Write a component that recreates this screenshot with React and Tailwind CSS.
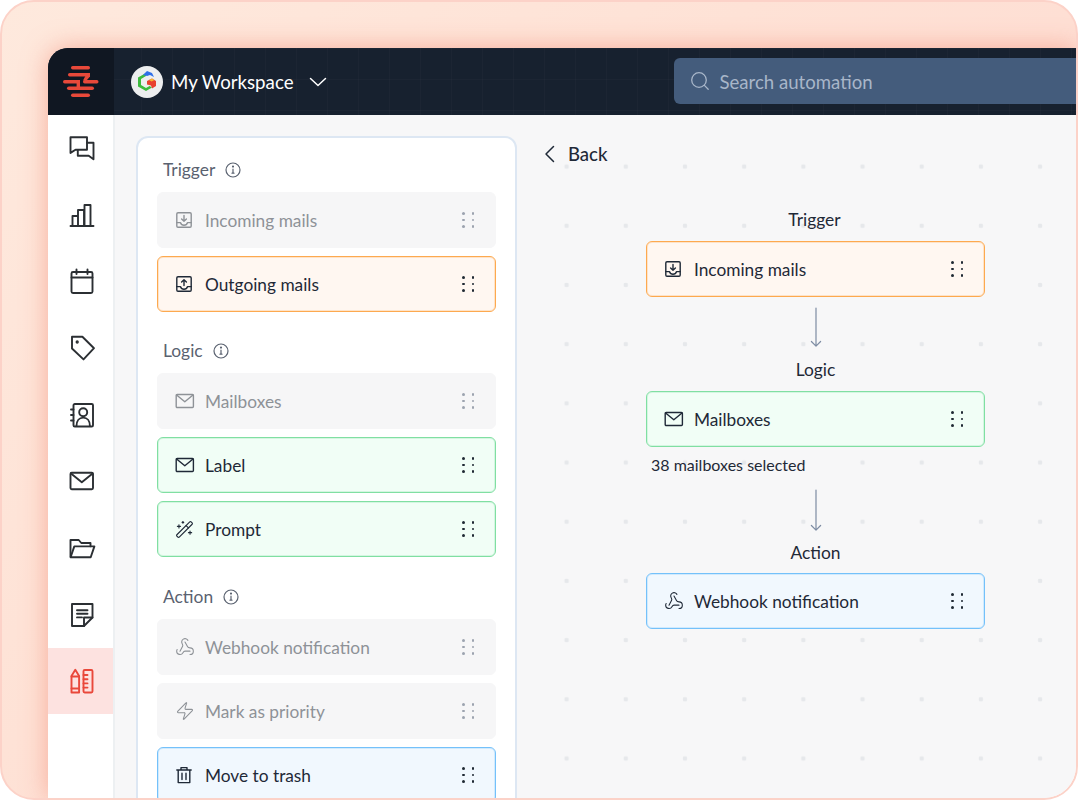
import React from "react";
import { Webhook, Zap, WandSparkles } from "lucide-react";

const S = ({ size = 24, className = "", children, vb, sw = 1.6 }) => (
  <svg width={size} height={size} viewBox={vb || "0 0 24 24"} fill="none" stroke="currentColor" strokeWidth={sw} strokeLinecap="round" strokeLinejoin="round" className={className}>
    {children}
  </svg>
);

const Logo = () => (
  <svg width="36" height="33" viewBox="0 0 36 33" fill="#e8493a">
    <rect x="8" y="1" width="19" height="3.4" rx="1.7" />
    <rect x="5" y="8" width="22" height="3.4" rx="1.7" />
    <rect x="0" y="15" width="16" height="3.4" rx="1.7" />
    <rect x="20" y="15" width="15.5" height="3.4" rx="1.7" />
    <rect x="4" y="21.5" width="27" height="3.6" rx="1.8" />
    <rect x="8" y="28.5" width="19" height="3.6" rx="1.8" />
    <path d="M24 8h3v3.4L23.5 15.5H20z" />
    <rect x="13.6" y="15" width="3.4" height="7" />
  </svg>
);

const WorkspaceMark = () => (
  <svg width="22" height="24" viewBox="0 0 22 24">
    <path d="M10 3 2 7.5v9L10 21l6-3.4-2.4-1.6L10 18l-5-3V9l5-3z" fill="#3dbb3d" />
    <path d="M7 5l4-4 5 2 2 4-4-2-3 1z" fill="#2f6fe8" />
    <path d="M11 11l5-2.5L20 11v5l-4 2.5-1-3-4-1z" fill="#e8412f" />
    <path d="M13 10l3-1.5 2.5 1.5-3 1.5z" fill="#f5b533" />
  </svg>
);

const NV = 1.9;
const ChatIcon = () => (
  <S size={28} vb="0 0 28 28" sw={NV}>
    <path d="M2.5 3.2H19v12.5H7.5l-5 3.2z" />
    <path d="M19 8.7h6.5V25.2l-4.8-3.5H9.8v-5.6" />
  </S>
);
const BarsIcon = () => (
  <S size={28} vb="0 0 28 28" sw={NV}>
    <path d="M2.5 25h23" />
    <path d="M4.5 25V15h5.5V25M10 25V9h6V25M16.5 25V4h6V25" />
  </S>
);
const CalIcon = () => (
  <S size={28} vb="0 0 28 28" sw={NV}>
    <rect x="3.5" y="5" width="21" height="21" rx="1.5" />
    <path d="M3.5 10.5h21M8.5 2.5v4.5M19.5 2.5v4.5" />
  </S>
);
const TagIcon = () => (
  <S size={28} vb="0 0 28 28" sw={NV}>
    <path d="M4 2.8h10.4L26 14.2 15.5 25.4 4 14.5z" />
    <circle cx="9.2" cy="8" r=".7" fill="currentColor" />
  </S>
);
const ContactIcon = () => (
  <S size={28} vb="0 0 28 28" sw={NV}>
    <rect x="5.5" y="3" width="19.5" height="22.5" rx="1.3" />
    <path d="M3 8.5h2.5M3 14h2.5M3 19.5h2.5" />
    <circle cx="15.2" cy="11.2" r="4" />
    <path d="M8.5 25c0-5.2 2.8-8.4 6.7-8.4s6.7 3.2 6.7 8.4" />
  </S>
);
const MailBig = () => (
  <S size={28} vb="0 0 28 28" sw={NV}>
    <rect x="2.5" y="5.8" width="22.5" height="16.4" rx="1.2" />
    <path d="m3 6.5 10.8 8.8L24.6 6.5" />
  </S>
);
const FolderIcon = () => (
  <S size={28} vb="0 0 28 28" sw={NV}>
    <path d="M2.5 22.5V6h8.2l2.6 3h9.2v3.3" />
    <path d="M2.6 23.3 6.3 12.4H26.4l-3.7 10.9z" />
  </S>
);
const NoteIcon = () => (
  <S size={28} vb="0 0 28 28" sw={NV}>
    <path d="M4 4h20.5v13.5L16 26H4z" />
    <path d="M24.5 17.5H16V26M9 10.2h10.5M9 13.8h10.5M9 17.4h5" />
  </S>
);
const ToolsIcon = () => (
  <S size={28} vb="0 0 28 28" sw={NV}>
    <path d="M3.5 9 7.3 2.8 11.1 9v16.5H3.5z" />
    <path d="M3.5 9.5h7.6M3.5 21.5h7.6" />
    <rect x="15.5" y="3" width="9" height="22.5" rx="1.2" />
    <path d="M15.5 8h4M15.5 12.2h4M15.5 16.4h4M15.5 20.6h4" />
  </S>
);

const Inbox = ({ up }) => (
  <S size={18} vb="0 0 18 18" sw={1.4}>
    <rect x="1.8" y="1.8" width="14.4" height="14.4" rx="1.2" />
    <path d="M1.8 11.6h3.6c.7 2 1.9 2.7 3.6 2.7s2.9-.7 3.6-2.7h3.6" />
    {up ? <path d="M9 10.5V4.8M6.6 7 9 4.8 11.4 7" /> : <path d="M9 4.5v5.7M6.6 8 9 10.2 11.4 8" />}
  </S>
);
const MailS = () => (
  <S size={20} vb="0 0 20 20" sw={1.4}>
    <rect x="1.2" y="3.5" width="17.2" height="13" rx="1" />
    <path d="m1.6 4 8.2 6.8L18 4" />
  </S>
);
const Trash = () => (
  <S size={18} vb="0 0 18 18" sw={1.4}>
    <path d="M1.8 4h14.4M6 4V1.6h6V4M3.2 4v12.6h11.6V4M7 7.2v6.4M11 7.2v6.4" />
  </S>
);

const Info = () => (
  <svg width="16" height="16" viewBox="0 0 16 16" fill="none" stroke="currentColor" strokeWidth="1.2" strokeLinecap="round">
    <circle cx="8" cy="8" r="7" />
    <path d="M8 7.2v4M7 11.2h2" />
    <circle cx="8" cy="4.6" r=".5" fill="currentColor" />
  </svg>
);

const Grip = ({ muted }) => (
  <div className={`grid grid-cols-2 gap-x-[7px] gap-y-[4.2px] ${muted ? "text-[#9ca3af]" : "text-[#1f2933]"}`}>
    {[0, 1, 2, 3, 4, 5].map((i) => (
      <span key={i} className="w-[2.5px] h-[2.5px] rounded-full bg-current" />
    ))}
  </div>
);

const tones = {
  muted: "bg-[#f6f6f7] border-[#f6f6f7] text-[#8e9297]",
  orange: "bg-[#fff7f1] border-[#fda94f] shadow-[inset_0_0_0_1px_rgba(253,169,79,0.25)] text-[#1f2937]",
  green: "bg-[#f1fef6] border-[#80dfa2] shadow-[inset_0_0_0_1px_rgba(128,223,162,0.25)] text-[#1f2937]",
  blue: "bg-[#f1f8fe] border-[#74c1fa] shadow-[inset_0_0_0_1px_rgba(116,193,250,0.25)] text-[#1f2937]",
};

const Card = ({ tone, icon, label }) => (
  <div className={`h-[56px] w-[339px] shrink-0 flex items-center border rounded-[6px] pl-[18px] pr-[21px] ${tones[tone]}`}>
    <span className="w-[30px] shrink-0 flex items-center -ml-px">{icon}</span>
    <span className="flex-1 text-[17.3px] leading-[24px] pt-px">{label}</span>
    <Grip muted={tone === "muted"} />
  </div>
);

const Heading = ({ children, className = "" }) => (
  <div className={`h-[20px] flex items-center gap-[10px] pl-[6px] mb-[12px] text-[17.4px] text-[#5a6270] ${className}`}>
    <span>{children}</span>
    <Info />
  </div>
);

const nav = [
  <ChatIcon />, <BarsIcon />, <CalIcon />, <TagIcon />, <ContactIcon />, <MailBig />, <FolderIcon />, <NoteIcon />,
];

const Arrow = ({ h }) => (
  <svg width="14" height={h} viewBox={`0 0 14 ${h}`} fill="none" stroke="#7d8ca3" strokeWidth="1.2" strokeLinecap="round" strokeLinejoin="round" className="mx-auto">
    <path d={`M7 1v${h - 3}M2.4 ${h - 6.5}l4.6 4.6 4.6-4.6`} />
  </svg>
);

const Mid = ({ children, className = "" }) => (
  <div className={`text-center text-[17.4px] leading-[24px] text-[#1f2937] ${className}`}>{children}</div>
);

export default function App() {
  return (
    <div className="w-[1078px] h-[800px] bg-white overflow-hidden antialiased" style={{ fontFamily: "Lato, 'Open Sans', sans-serif" }}>
      <div className="w-full h-full rounded-[34px] border-2 border-[#fcd2c8] overflow-hidden pl-[46px] pt-[46px] bg-[linear-gradient(135deg,#fee9dd_0%,#fee2d6_40%,#fed8cf_100%)]">
        <div className="w-full h-full flex flex-col rounded-tl-[20px] overflow-hidden shadow-[0_0_26px_rgba(245,150,130,0.7)] bg-white">
          <header className="h-[67px] shrink-0 flex bg-[#17212f] bg-[linear-gradient(rgba(255,255,255,0.018)_1px,transparent_1px),linear-gradient(90deg,rgba(255,255,255,0.018)_1px,transparent_1px)] bg-[size:31px_31px]">
            <div className="w-[66px] h-full shrink-0 bg-[#101722] flex items-center justify-center">
              <Logo />
            </div>
            <div className="flex items-center pl-[17px]">
              <div className="w-[32px] h-[32px] rounded-full bg-[#edeeef] flex items-center justify-center shrink-0">
                <WorkspaceMark />
              </div>
              <span className="ml-[8px] mt-[2px] text-[18.7px] text-white whitespace-nowrap">My Workspace</span>
              <svg width="18" height="10" viewBox="0 0 18 10" fill="none" stroke="#fff" strokeWidth="1.5" strokeLinecap="round" strokeLinejoin="round" className="ml-[15px]">
                <path d="m1.5 1.5 7.5 7 7.5-7" />
              </svg>
            </div>
            <div className="ml-[347px] mt-[10px] h-[46px] flex-1 rounded-l-[6px] bg-[#445c7c] flex items-center pl-[16px] text-[#a8b6c9]">
              <svg width="20" height="20" viewBox="0 0 20 20" fill="none" stroke="currentColor" strokeWidth="1.3" strokeLinecap="round">
                <circle cx="9" cy="9" r="7.3" />
                <path d="m14.4 14.4 3.8 3.8" />
              </svg>
              <span className="ml-[10px] mt-[4px] text-[18.6px]">Search automation</span>
            </div>
          </header>

          <div className="flex-1 flex min-h-0">
            <nav className="w-[67px] shrink-0 bg-white border-r-2 border-[#edf0f2] text-[#2b2f33] flex flex-col">
              {nav.map((icon, i) => (
                <div key={i} className="h-[66.6px] shrink-0 flex items-center justify-center pl-[2px]">{icon}</div>
              ))}
              <div className="h-[66.6px] w-[65px] shrink-0 flex items-center justify-center pl-[2px] bg-[#fde2e0] text-[#e9483b]">
                <ToolsIcon />
              </div>
            </nav>

            <main className="flex-1 min-w-0 flex bg-[#f7f7f8] pl-[21px] pt-[21px]">
              <section className="w-[381px] shrink-0 h-[700px] bg-white border-2 border-[#dde7f3] rounded-[12px] pt-[22px] px-[19px]">
                <Heading>Trigger</Heading>
                <div className="flex flex-col gap-[8px]">
                  <Card tone="muted" icon={<Inbox />} label="Incoming mails" />
                  <Card tone="orange" icon={<Inbox up />} label="Outgoing mails" />
                </div>
                <Heading className="mt-[29px]">Logic</Heading>
                <div className="flex flex-col gap-[8px]">
                  <Card tone="muted" icon={<MailS />} label="Mailboxes" />
                  <Card tone="green" icon={<MailS />} label="Label" />
                  <Card tone="green" icon={<WandSparkles size={19} strokeWidth={1.4} />} label="Prompt" />
                </div>
                <Heading className="mt-[30px]">Action</Heading>
                <div className="flex flex-col gap-[8px]">
                  <Card tone="muted" icon={<Webhook size={20} strokeWidth={1.3} />} label="Webhook notification" />
                  <Card tone="muted" icon={<Zap size={20} strokeWidth={1.3} />} label="Mark as priority" />
                  <Card tone="blue" icon={<Trash />} label="Move to trash" />
                </div>
              </section>

              <section className="flex-1 min-w-0 -mt-[21px] pt-[26px] bg-[radial-gradient(circle,#e6e8eb_2px,transparent_2.6px)] bg-[size:59.2px_59.2px] bg-[position:20px_22px]">
                <div className="flex items-center pl-[26px] h-[26px] text-[#1f2937]">
                  <svg width="14" height="18" viewBox="0 0 14 18" fill="none" stroke="currentColor" strokeWidth="1.5" strokeLinecap="round" strokeLinejoin="round">
                    <path d="M10.5 1.5 3 9l7.5 7.5" />
                  </svg>
                  <span className="ml-[11px] mt-[2px] text-[18.5px] font-medium">Back</span>
                </div>
                <div className="ml-[129px] w-[339px] mt-[41px]">
                  <Mid className="-translate-x-px">Trigger</Mid>
                  <div className="mt-[9px]"><Card tone="orange" icon={<Inbox />} label="Incoming mails" /></div>
                  <div className="mt-[10px]"><Arrow h={41} /></div>
                  <Mid className="mt-[10px]">Logic</Mid>
                  <div className="mt-[9px]"><Card tone="green" icon={<MailS />} label="Mailboxes" /></div>
                  <div className="mt-[7px] pl-[5px] text-[16px] leading-[22px] text-[#1f2937]">38 mailboxes selected</div>
                  <div className="mt-[13px]"><Arrow h={43} /></div>
                  <Mid className="mt-[9px]">Action</Mid>
                  <div className="mt-[8px]"><Card tone="blue" icon={<Webhook size={20} strokeWidth={1.3} />} label="Webhook notification" /></div>
                </div>
              </section>
            </main>
          </div>
        </div>
      </div>
    </div>
  );
}
